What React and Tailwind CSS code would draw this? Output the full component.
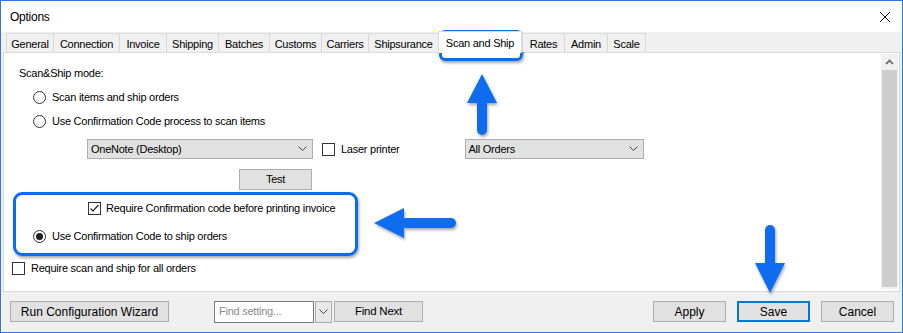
import React from 'react';

const font = { fontFamily: '"Liberation Sans", Arial, sans-serif', letterSpacing: '-0.25px' };

const tabs = [
  { label: 'General', w: 'w-[47px]' },
  { label: 'Connection', w: 'w-[66px]' },
  { label: 'Invoice', w: 'w-[47px]' },
  { label: 'Shipping', w: 'w-[52px]' },
  { label: 'Batches', w: 'w-[51px]' },
  { label: 'Customs', w: 'w-[52px]' },
  { label: 'Carriers', w: 'w-[47px]' },
  { label: 'Shipsurance', w: 'w-[70px]' },
  { label: 'Scan and Ship', w: 'w-[84px]', active: true },
  { label: 'Rates', w: 'w-[42px]' },
  { label: 'Admin', w: 'w-[43px]' },
  { label: 'Scale', w: 'w-[39px]' },
];

const Chevron = () => (
  <svg width="9" height="6" viewBox="0 0 9 6" className="shrink-0">
    <polyline points="0.5,0.5 4.5,4.5 8.5,0.5" fill="none" stroke="#444" strokeWidth="1" />
  </svg>
);

const Radio = ({ checked }) => (
  <span className="w-[13px] h-[13px] rounded-full border border-[#333] bg-white flex items-center justify-center shrink-0">
    {checked && <span className="w-[7px] h-[7px] rounded-full bg-[#222]" />}
  </span>
);

const Check = ({ checked }) => (
  <span className="w-[13px] h-[13px] border border-[#333] bg-white flex items-center justify-center shrink-0">
    {checked && (
      <svg width="11" height="11" viewBox="0 0 11 11">
        <polyline points="1.5,5.5 4,8 9.5,2" fill="none" stroke="#222" strokeWidth="1.2" />
      </svg>
    )}
  </span>
);

const Button = ({ children, className = '', border = 'border border-[#adadad]' }) => (
  <div className={`h-[21px] bg-[#e1e1e1] ${border} flex items-center justify-center text-black ${className}`}>
    {children}
  </div>
);

export default function App() {
  return (
    <div style={font} className="relative w-[903px] h-[333px] border border-[#2a7ad9] bg-white flex flex-col overflow-hidden text-[11px] text-black">
      {/* title bar */}
      <div className="h-[31px] flex items-center justify-between pl-[9px] pr-[11px] bg-white shrink-0">
        <span className="text-[12px]">Options</span>
        <svg width="12" height="12" viewBox="0 0 12 12">
          <path d="M1 1 L11 11 M11 1 L1 11" stroke="#111" strokeWidth="1" />
        </svg>
      </div>

      <div className="flex-1 flex flex-col bg-[#f0f0f0]">
        {/* tabs */}
        <div className="h-[20px] flex items-end pl-[5px] relative z-10">
          {tabs.map((t) =>
            t.active ? (
              <div key={t.label} className={`${t.w} h-[22px] -mb-[1px] bg-white border border-b-0 border-[#d9d9d9] flex items-start justify-center pt-[3px]`}>
                {t.label}
              </div>
            ) : (
              <div key={t.label} className={`${t.w} h-[19px] bg-[#f0f0f0] border border-r-0 border-b-0 border-[#d9d9d9] last:border-r flex items-center justify-center pt-[2px]`}>
                {t.label}
              </div>
            )
          )}
        </div>

        {/* panel */}
        <div className="ml-[2px] mr-[2px] h-[240px] bg-white border border-[#d9d9d9] flex">
          <div className="flex-1 flex flex-col">
            <div className="h-[20px] mt-[10px] ml-[15px] flex items-center">Scan&amp;Ship mode:</div>
            <div className="h-[20px] mt-[4px] ml-[29px] flex items-center gap-[6px]">
              <Radio /> <span>Scan items and ship orders</span>
            </div>
            <div className="h-[20px] mt-[4px] ml-[29px] flex items-center gap-[6px]">
              <Radio /> <span>Use Confirmation Code process to scan items</span>
            </div>
            <div className="h-[20px] mt-[8px] ml-[83px] flex items-center">
              <div className="w-[226px] h-[20px] bg-[#e1e1e1] border border-[#adadad] flex items-center justify-between pl-[3px] pr-[5px]">
                <span>OneNote (Desktop)</span>
                <Chevron />
              </div>
              <div className="ml-[9px] flex items-center gap-[6px]">
                <Check /> <span>Laser printer</span>
              </div>
              <div className="ml-[65px] w-[179px] h-[20px] bg-[#e1e1e1] border border-[#adadad] flex items-center justify-between pl-[3px] pr-[5px]">
                <span>All Orders</span>
                <Chevron />
              </div>
            </div>
            <div className="mt-[10px] ml-[235px]">
              <Button className="w-[73px] h-[20px] text-[11px]">Test</Button>
            </div>
            <div className="h-[20px] mt-[8px] ml-[84px] flex items-center gap-[5px]">
              <Check checked /> <span>Require Confirmation code before printing invoice</span>
            </div>
            <div className="h-[20px] mt-[8px] ml-[29px] flex items-center gap-[6px]">
              <Radio checked /> <span>Use Confirmation Code to ship orders</span>
            </div>
            <div className="h-[20px] mt-[12px] ml-[8px] flex items-center gap-[6px]">
              <Check /> <span>Require scan and ship for all orders</span>
            </div>
          </div>

          {/* scrollbar */}
          <div className="w-[17px] mt-[1px] mb-[2px] mr-[1px] bg-[#f0f0f0] flex flex-col">
            <div className="h-[16px] flex items-center justify-center">
              <svg width="9" height="6" viewBox="0 0 9 6">
                <polyline points="1,5 4.5,1.5 8,5" fill="none" stroke="#606060" strokeWidth="1.6" />
              </svg>
            </div>
            <div className="flex-1 mx-[1px] mb-[2px] bg-[#cdcdcd]" />
          </div>
        </div>

        {/* footer */}
        <div className="flex-1 flex items-center pl-[9px] pr-[8px] pb-[1px]">
          <Button className="w-[159px] text-[12px] tracking-normal">Run Configuration Wizard</Button>
          <div className="ml-[45px] w-[100px] h-[22px] bg-white border border-[#7a7a7a] flex items-center pl-[4px] text-[#8a8a8a]">
            Find setting...
          </div>
          <div className="ml-[1px] w-[17px] h-[22px] bg-[#e8e8e8] border border-[#adadad] flex items-center justify-center">
            <Chevron />
          </div>
          <Button className="ml-[2px] w-[89px] h-[21px] text-[11.5px]">Find Next</Button>
          <div className="flex-1" />
          <Button className="w-[73px] text-[12px] tracking-normal">Apply</Button>
          <Button className="ml-[11px] w-[73px] text-[12px] tracking-normal" border="border-2 border-[#0078d7]">Save</Button>
          <Button className="ml-[11px] w-[73px] text-[12px] tracking-normal">Cancel</Button>
        </div>
      </div>

      {/* annotation boxes */}
      <div className="absolute left-[438px] top-[29px] w-[84px] h-[31px] border-[3px] border-[#0a6cf0] rounded-[6px] shadow-[1px_2px_3px_rgba(0,0,0,0.35)] pointer-events-none" />
      <div className="absolute left-[12px] top-[191px] w-[345px] h-[64px] border-[3px] border-[#0a6cf0] rounded-[9px] shadow-[1px_2px_3px_rgba(0,0,0,0.35)] pointer-events-none" />

      {/* annotation arrows */}
      <svg className="absolute left-0 top-0 pointer-events-none" width="903" height="333" viewBox="0 0 903 333">
        <defs>
          <filter id="sh" x="-20%" y="-20%" width="140%" height="140%">
            <feDropShadow dx="1" dy="2" stdDeviation="1.5" floodColor="#000" floodOpacity="0.35" />
          </filter>
        </defs>
        <g fill="#0a6cf0" stroke="#0a6cf0" filter="url(#sh)">
          <line x1="481" y1="100" x2="481" y2="129" strokeWidth="10" strokeLinecap="round" />
          <polygon points="481,73 466,102 496,102" stroke="none" />
          <line x1="405" y1="222" x2="450" y2="222" strokeWidth="10" strokeLinecap="round" />
          <polygon points="373,222 403,207 403,237" stroke="none" />
          <line x1="769" y1="229" x2="769" y2="264" strokeWidth="10" strokeLinecap="round" />
          <polygon points="754,262 784,262 769,292" stroke="none" />
        </g>
      </svg>
    </div>
  );
}
